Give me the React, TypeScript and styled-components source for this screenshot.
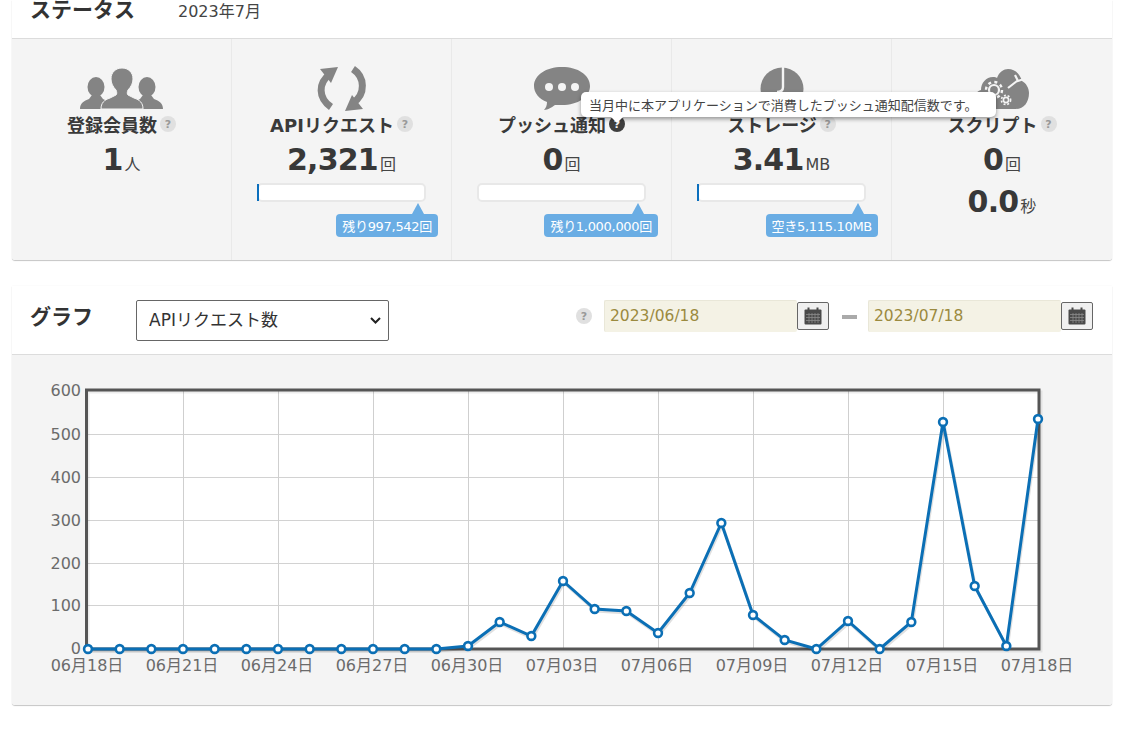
import React from "react";
import styled, { createGlobalStyle } from "styled-components";

const Global = createGlobalStyle`
  html, body { margin: 0; padding: 0; background: #fff; }
  body { font-family: "DejaVu Sans", "Noto Sans CJK JP", sans-serif; color: #333; }
`;

const Page = styled.div`
  position: relative;
  width: 1136px;
  height: 730px;
  padding: 0 24px 0 12px;
  box-sizing: border-box;
  overflow: hidden;
`;

const Card = styled.section<{ $gap?: number }>`
  margin-top: ${(p) => p.$gap ?? 0}px;
  background: #fff;
  border-radius: 0 0 3px 3px;
  box-shadow: 0 0 1px rgba(0, 0, 0, 0.12), 0 1px 1px rgba(0, 0, 0, 0.22);
`;

const StatusHeader = styled.header`
  height: 38px;
  display: flex;
  align-items: flex-start;
  padding-left: 18px;
  gap: 43px;
  border-bottom: 1px solid #dcdcdc;
  box-sizing: content-box;
`;

const Heading = styled.h2`
  margin: 0;
  font-size: 21px;
  line-height: 21px;
  font-weight: 700;
  color: #333;
`;

const Month = styled.span`
  font-size: 16px;
  line-height: 24px;
  color: #444;
`;

const StatGrid = styled.div`
  display: grid;
  grid-template-columns: 219px 220px 220px 220px 221px;
  height: 221px;
  background: #f4f4f4;
  border-radius: 0 0 3px 3px;
`;

const StatCol = styled.div`
  display: flex;
  flex-direction: column;
  align-items: center;
  border-left: 1px solid #e9e9e9;
  box-sizing: border-box;
  &:first-child { border-left: none; }
`;

const IconSlot = styled.div`
  height: 44px;
  margin-top: 28px;
  display: flex;
  align-items: center;
  justify-content: center;
  svg { display: block; }
`;

const StatTitle = styled.div`
  margin-top: 1px;
  height: 24px;
  display: flex;
  align-items: center;
  gap: 3px;
  font-size: 18px;
  font-weight: 700;
  color: #3a3a3a;
  white-space: nowrap;
`;

const Help = styled.span<{ $active?: boolean }>`
  width: 16px;
  height: 16px;
  border-radius: 50%;
  flex: none;
  display: inline-flex;
  align-items: center;
  justify-content: center;
  font-size: 11px;
  font-weight: 700;
  background: ${(p) => (p.$active ? "#3f3f3f" : "#e0e0e0")};
  color: ${(p) => (p.$active ? "#f4f4f4" : "#999")};
`;

const Value = styled.div<{ $gap: number }>`
  margin-top: ${(p) => p.$gap}px;
  height: 32px;
  display: flex;
  align-items: baseline;
  justify-content: center;
  font-size: 30px;
  line-height: 32px;
  font-weight: 700;
  letter-spacing: -0.8px;
  color: #383838;
`;

const Unit = styled.span`
  font-size: 16px;
  font-weight: 400;
  letter-spacing: 0;
  margin-left: 2px;
  color: #444;
`;

const Meter = styled.div`
  width: 100%;
  margin-top: 7px;
  display: flex;
  flex-direction: column;
`;

const Track = styled.div`
  position: relative;
  margin-left: 25px;
  width: 169px;
  height: 19px;
  background: #fff;
  border: 2px solid #e8e8e8;
  border-radius: 5px;
  box-sizing: border-box;
`;

const Fill = styled.div`
  position: absolute;
  left: -2px;
  top: -1px;
  bottom: -1px;
  background: #0b6fbd;
`;

const Bubble = styled.div`
  position: relative;
  align-self: flex-end;
  margin: 12px 13px 0 0;
  height: 23px;
  padding: 0 6px;
  display: flex;
  align-items: center;
  font-size: 13px;
  letter-spacing: -0.3px;
  color: #fff;
  background: #6aade4;
  border-radius: 4px;
  white-space: nowrap;
  &::before {
    content: "";
    position: absolute;
    right: 14px;
    top: -11px;
    border-left: 6px solid transparent;
    border-right: 6px solid transparent;
    border-bottom: 11px solid #6aade4;
  }
`;

const GraphHeader = styled.header`
  height: 68px;
  display: flex;
  align-items: flex-start;
  padding-left: 18px;
  border-bottom: 1px solid #dcdcdc;
`;

const GraphHeading = styled(Heading)`
  margin-top: 20px;
  line-height: 22px;
  width: 106px;
  flex: none;
`;

const chevron =
  "url(\"data:image/svg+xml,%3Csvg xmlns='http://www.w3.org/2000/svg' width='11' height='7' viewBox='0 0 11 7'%3E%3Cpath d='M1 1l4.5 4.5L10 1' fill='none' stroke='%23222' stroke-width='2'/%3E%3C/svg%3E\")";

const MetricSelect = styled.select`
  margin-top: 14px;
  width: 253px;
  height: 41px;
  padding: 0 8px 2px 12px;
  font-family: inherit;
  font-size: 17px;
  color: #333;
  background: #fff ${chevron} no-repeat right 7px center;
  appearance: none;
  border: 1px solid #666;
  border-radius: 2px;
`;

const DateRange = styled.div`
  margin: 14px 0 0 auto;
  padding-right: 19px;
  display: flex;
  align-items: flex-start;
`;

const RangeHelp = styled(Help)`
  margin: 8px 12px 0 0;
`;

const DateInput = styled.input`
  width: 193px;
  height: 32px;
  padding: 0 5px 1px;
  box-sizing: border-box;
  font-family: inherit;
  font-size: 15.5px;
  color: #9b8a3f;
  background: #f4f2e5;
  border: none;
  border-left: 1px solid #e9e7d8;
  border-top: 1px solid #e9e7d8;
  border-radius: 2px;
  outline: none;
`;

const CalendarButton = styled.button`
  width: 32px;
  height: 28px;
  margin-top: 2px;
  padding: 0;
  display: flex;
  align-items: center;
  justify-content: center;
  background: #f0f0f0;
  border: 1px solid #666;
  border-radius: 2px;
`;

const Dash = styled.span`
  width: 15px;
  height: 4px;
  margin: 15px 11px 0 13px;
  background: #aaa;
`;

const ChartBody = styled.div`
  height: 350px;
  background: #f4f4f4;
  border-radius: 0 0 3px 3px;
  svg { display: block; }
`;

const Tooltip = styled.div`
  position: absolute;
  left: 581px;
  top: 92px;
  width: 415px;
  height: 25px;
  padding-left: 8px;
  box-sizing: border-box;
  display: flex;
  align-items: center;
  font-size: 13px;
  color: #444;
  background: #fff;
  border-radius: 5px;
  box-shadow: 0 2px 4px rgba(0, 0, 0, 0.4);
  white-space: nowrap;
  &::after {
    content: "";
    position: absolute;
    left: 30px;
    top: 25px;
    border-left: 6px solid transparent;
    border-right: 6px solid transparent;
    border-top: 6px solid #fff;
  }
`;

const G = "#848484";

const UsersIcon = () => (
  <svg width="84" height="42" viewBox="80 69 84 42" fill={G}>
    <ellipse cx="96" cy="88" rx="8.5" ry="10" />
    <path d="M80 110c0-6 4-8 9-10l3-4h8l3 4 8 4-4 6z" />
    <ellipse cx="147" cy="88" rx="8.5" ry="10" />
    <path d="M163 110c0-6-4-8-9-10l-3-4h-8l-3 4-8 4 4 6z" />
    <path d="M101 110c0-6 3-9 9-11l6-3c1-1 1-3 0-5-3-3-5-7-5-11 0-7 5-11 11-11s11 4 11 11c0 4-2 8-5 11-1 2-1 4 0 5l6 3c6 2 9 5 9 11z" stroke="#f4f4f4" strokeWidth="1" />
  </svg>
);

const RefreshIcon = () => (
  <svg width="52" height="46" viewBox="316 67 52 46" fill={G}>
    <path d="M330 75C318 84 318 99 331 108" fill="none" stroke={G} strokeWidth="7" />
    <path d="M338 68l-18 2 11 14z" />
    <path d="M353 70c12 8 13 25 0 34" fill="none" stroke={G} strokeWidth="7" />
    <path d="M345 112l18-2-11-14z" />
  </svg>
);

const CommentIcon = () => (
  <svg width="56" height="44" viewBox="533 68 56 44" fill={G}>
    <path d="M561 68c16 0 28 8 28 19s-12 19-28 19c-3 0-5 0-7 0-3 2-7 5-11 5 2-2 3-5 3-8-8-3-13-9-13-16 0-11 12-19 28-19z" />
    <circle cx="548" cy="88" r="4" fill="#f4f4f4" />
    <circle cx="561" cy="88" r="4" fill="#f4f4f4" />
    <circle cx="574" cy="88" r="4" fill="#f4f4f4" />
  </svg>
);

const PieIcon = () => (
  <svg width="44" height="44" viewBox="760 68 44 44" fill={G}>
    <circle cx="782" cy="90" r="21.5" />
    <path d="M783 68v20c0 3-2 5-6 5" fill="none" stroke="#f4f4f4" strokeWidth="2.4" />
  </svg>
);

const CloudIcon = () => (
  <svg width="58" height="42" viewBox="974 69 58 42" fill={G}>
    <path d="M982 110c-5 0-7-4-7-9s3-9 7-10c0-7 5-13 12-13 2 0 3 0 4 1 2-6 7-9 11-9 7 0 12 5 14 12 4 2 7 7 7 12 0 9-5 16-13 16z" />
    <circle cx="995" cy="91" r="5" fill="none" stroke="#f4f4f4" strokeWidth="2.2" />
    <circle cx="995" cy="91" r="8" fill="none" stroke="#f4f4f4" strokeWidth="2.4" strokeDasharray="3 3.3" />
    <circle cx="1007" cy="101" r="2.6" fill="none" stroke="#f4f4f4" strokeWidth="1.6" />
    <circle cx="1007" cy="101" r="4.6" fill="none" stroke="#f4f4f4" strokeWidth="1.6" strokeDasharray="2 1.8" />
    <path d="M1009 89l9-7M1016 76l3 6 6-2" fill="none" stroke="#f4f4f4" strokeWidth="2.2" />
  </svg>
);

const CalendarIcon = () => (
  <svg width="18" height="18" viewBox="0 0 18 18">
    <rect x="0.5" y="2.5" width="17" height="15" rx="1" fill="#4a4a4a" />
    <rect x="3.5" y="0.5" width="2" height="4" fill="#4a4a4a" />
    <rect x="12.5" y="0.5" width="2" height="4" fill="#4a4a4a" />
    <path d="M2 7.5h14M2 10.5h14M2 13.5h14M5 6v10M8 6v10M11 6v10M14 6v10" stroke="#8a8a8a" strokeWidth="0.8" />
  </svg>
);

const ys = [649,649,649,649,649,649,649,649,649,649,649,649,646,622,636,581,609,611,633,593,523,615,640,649,621,649,622,422,586,646,419];
const pts = ys.map((y, i) => [88 + i * 31.667, y] as const);
const linePoints = pts.map(([x, y]) => `${x},${y}`).join(" ");
const shadowPoints = pts.map(([x, y]) => `${x + 1},${y + 2}`).join(" ");

const yTicks: [string, number][] = [["600",390],["500",434],["400",477],["300",520],["200",563],["100",605],["0",648]];
const xTicks = ["06月18日","06月21日","06月24日","06月27日","06月30日","07月03日","07月06日","07月09日","07月12日","07月15日","07月18日"];

const ChartLabel = styled.text`
  font-family: "DejaVu Sans", "Noto Sans CJK JP", sans-serif;
  font-size: 16px;
  fill: #6b6b6b;
`;

const Chart = () => (
  <svg width="1100" height="350" viewBox="12 355 1100 350">
    <rect x="87" y="390" width="952" height="259" fill="#fff" />
    {yTicks.slice(1, 6).map(([t, y]) => (
      <line key={t} x1="87" x2="1039" y1={y + 0.5} y2={y + 0.5} stroke="#d2d2d2" strokeWidth="1" />
    ))}
    {xTicks.slice(1, 10).map((_, i) => {
      const x = 183 + i * 95;
      return <line key={i} x1={x + 0.5} x2={x + 0.5} y1="390" y2="649" stroke="#cfcfcf" strokeWidth="1" />;
    })}
    <rect x="88" y="392" width="953" height="259" fill="none" stroke="#000" strokeOpacity="0.07" strokeWidth="3" />
    <rect x="86.5" y="390" width="952.5" height="259" fill="none" stroke="#555" strokeWidth="3" />
    <polyline points={shadowPoints} fill="none" stroke="#000" strokeOpacity="0.12" strokeWidth="3" />
    <polyline points={linePoints} fill="none" stroke="#0b6fb5" strokeWidth="3" />
    {pts.map(([x, y], i) => (
      <circle key={i} cx={x} cy={y} r="3.9" fill="#fff" stroke="#0b6fb5" strokeWidth="2.6" />
    ))}
    {yTicks.map(([t, y]) => (
      <ChartLabel key={t} x="81" y={y + 6} textAnchor="end">{t}</ChartLabel>
    ))}
    {xTicks.map((t, i) => (
      <ChartLabel key={t} x={88 + i * 95 - 1} y="671" textAnchor="middle">{t}</ChartLabel>
    ))}
  </svg>
);

export default function App() {
  return (
    <Page>
      <Global />
      <Card>
        <StatusHeader>
          <Heading>ステータス</Heading>
          <Month>2023年7月</Month>
        </StatusHeader>
        <StatGrid>
          <StatCol>
            <IconSlot><UsersIcon /></IconSlot>
            <StatTitle>登録会員数<Help>?</Help></StatTitle>
            <Value $gap={8}>1<Unit>人</Unit></Value>
          </StatCol>
          <StatCol>
            <IconSlot><RefreshIcon /></IconSlot>
            <StatTitle>APIリクエスト<Help>?</Help></StatTitle>
            <Value $gap={8}>2,321<Unit>回</Unit></Value>
            <Meter>
              <Track><Fill style={{ width: 2 }} /></Track>
              <Bubble>残り997,542回</Bubble>
            </Meter>
          </StatCol>
          <StatCol>
            <IconSlot><CommentIcon /></IconSlot>
            <StatTitle>プッシュ通知<Help $active>?</Help></StatTitle>
            <Value $gap={8}>0<Unit>回</Unit></Value>
            <Meter>
              <Track />
              <Bubble>残り1,000,000回</Bubble>
            </Meter>
          </StatCol>
          <StatCol>
            <IconSlot><PieIcon /></IconSlot>
            <StatTitle>ストレージ<Help>?</Help></StatTitle>
            <Value $gap={8}>3.41<Unit>MB</Unit></Value>
            <Meter>
              <Track><Fill style={{ width: 2 }} /></Track>
              <Bubble>空き5,115.10MB</Bubble>
            </Meter>
          </StatCol>
          <StatCol>
            <IconSlot><CloudIcon /></IconSlot>
            <StatTitle>スクリプト<Help>?</Help></StatTitle>
            <Value $gap={8}>0<Unit>回</Unit></Value>
            <Value $gap={10}>0.0<Unit>秒</Unit></Value>
          </StatCol>
        </StatGrid>
      </Card>
      <Card $gap={26}>
        <GraphHeader>
          <GraphHeading>グラフ</GraphHeading>
          <MetricSelect defaultValue="api">
            <option value="api">APIリクエスト数</option>
          </MetricSelect>
          <DateRange>
            <RangeHelp>?</RangeHelp>
            <DateInput readOnly value="2023/06/18" />
            <CalendarButton type="button"><CalendarIcon /></CalendarButton>
            <Dash />
            <DateInput readOnly value="2023/07/18" />
            <CalendarButton type="button"><CalendarIcon /></CalendarButton>
          </DateRange>
        </GraphHeader>
        <ChartBody><Chart /></ChartBody>
      </Card>
      <Tooltip>当月中に本アプリケーションで消費したプッシュ通知配信数です。</Tooltip>
    </Page>
  );
}
